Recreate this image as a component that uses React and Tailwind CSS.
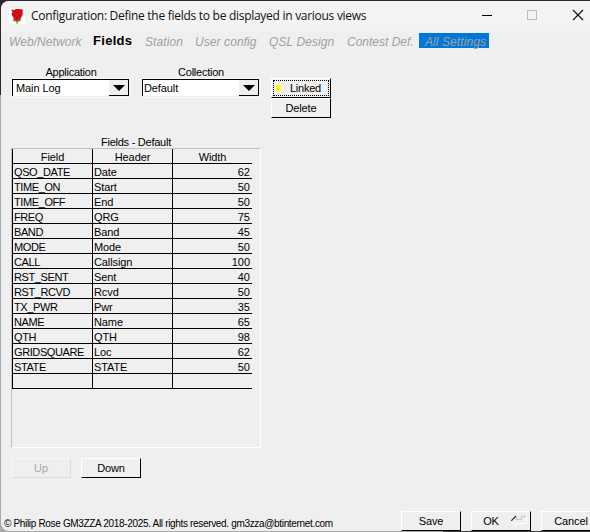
const rows = [
  ['QSO_DATE', 'Date', '62'],
  ['TIME_ON', 'Start', '50'],
  ['TIME_OFF', 'End', '50'],
  ['FREQ', 'QRG', '75'],
  ['BAND', 'Band', '45'],
  ['MODE', 'Mode', '50'],
  ['CALL', 'Callsign', '100'],
  ['RST_SENT', 'Sent', '40'],
  ['RST_RCVD', 'Rcvd', '50'],
  ['TX_PWR', 'Pwr', '35'],
  ['NAME', 'Name', '65'],
  ['QTH', 'QTH', '98'],
  ['GRIDSQUARE', 'Loc', '62'],
  ['STATE', 'STATE', '50'],
  ['', '', ''],
];

const cellStyles = ['px-px tracking-[-0.4px]', 'px-px tracking-[-0.1px]', 'pr-[2px] text-right'];

function Button({ children, disabled, className = '' }) {
  const tone = disabled
    ? 'border-t-[#f7f7f7] border-l-[#f7f7f7] border-r-[#dcdcdc] border-b-[#dcdcdc] text-[#a8a8a8]'
    : 'border-t-white border-l-white border-r-black border-b-black text-black';
  return (
    <button className={`flex h-5 w-[60px] shrink-0 items-center justify-center border bg-[#efefef] tracking-[-0.1px] ${tone} ${className}`}>
      {children}
    </button>
  );
}

function Combo({ label, value, inset }) {
  return (
    <div className="w-[120px]">
      <div className="h-3 text-center leading-[13px] tracking-[-0.25px]">{label}</div>
      <div className="flex h-5 border border-[#f8f8f8]">
        <div className="flex h-[17px] w-[117px] border border-b-0 border-black bg-white">
          <span className={`flex-1 leading-[17px] tracking-[-0.1px] ${inset}`}>{value}</span>
          <span className="flex w-[19px] items-center justify-center border-b border-black bg-[#efefef]">
            <svg width="12" height="6" viewBox="0 0 12 6"><path d="M0 0H12L6 6Z" /></svg>
          </span>
        </div>
      </div>
    </div>
  );
}

function Rose() {
  return (
    <svg width="16" height="16" viewBox="0 0 16 16" className="ml-2 bg-white">
      <path d="M8 10V16M8 13.5L3.5 12M8 14L12 12" stroke="#4f9a3f" strokeWidth="1.1" fill="none" />
      <path d="M2 1.5L5 2L7 1L10 1L14 1.5L13.5 4L14 6L12.5 9L11 12L8 13L5 12L4 9L2.5 6L3.5 4Z" fill="#d8121b" />
      <path d="M6 3L8 5L11 3M4 6L8 9L12 7M8 9V12" stroke="#a00c14" strokeWidth="1" fill="none" />
    </svg>
  );
}

export default function App() {
  return (
    <div className="h-[532px] w-[590px] overflow-hidden bg-[linear-gradient(to_bottom,#2b272b_95px,#aaaaaa_95px)] pt-px font-['Liberation_Sans',Arial,sans-serif] text-[11px] text-black">
      <div className="h-[531px] bg-[linear-gradient(to_right,transparent_443px,#3a3a3a_443px)] pb-px pl-px">
        <div className="flex h-[530px] w-[589px] flex-col overflow-hidden rounded-l-lg bg-[#efefef]">
          <header className="flex h-[30px] shrink-0 items-center bg-[#f3f3f3]">
            <Rose />
            <h1 className="ml-[6px] flex-1 whitespace-nowrap font-['Open_Sans',sans-serif] text-[12px] tracking-[-0.28px] text-[#111]">
              Configuration: Define the fields to be displayed in various views
            </h1>
            <svg width="108" height="30" viewBox="0 0 108 30" fill="none" shapeRendering="crispEdges">
              <path d="M0 14.5H10" stroke="#000" />
              <rect x="45.5" y="9.5" width="9" height="9" rx="1" stroke="#bdbdbd" />
              <path d="M91 9L101 19M101 9L91 19" stroke="#111" strokeWidth="1.2" shapeRendering="auto" />
            </svg>
          </header>

          <nav className="mt-[2px] grid h-[15px] shrink-0 grid-cols-[84px_52px_50px_74px_78px_72px_70px] pl-2 text-[12px] leading-[18px] tracking-[0.08px] whitespace-nowrap text-[#a0a0a0] italic">
            <span>Web/Network</span>
            <b className="text-[13px] leading-[15px] tracking-[0.3px] text-black not-italic">Fields</b>
            <span>Station</span>
            <span>User config</span>
            <span>QSL Design</span>
            <span className="tracking-normal">Contest Def.</span>
            <span className="h-[15px] bg-[#0078d7] pl-[6px]">All Settings</span>
          </nav>

          <section className="mt-[18px] flex pl-[10px]">
            <Combo label="Application" value="Main Log" inset="pl-[3px]" />
            <div className="ml-[10px]"><Combo label="Collection" value="Default" inset="pl-px" /></div>
            <div className="mt-3 ml-[10px]">
              <Button className="p-px">
                <span className="flex h-4 w-full items-center border border-dotted border-black">
                  <i className="ml-px box-content h-[6px] w-[5px] shrink-0 border border-white bg-[#ffff00]" />
                  <span className="ml-2 tracking-[-0.25px]">Linked</span>
                </span>
              </Button>
              <Button>Delete</Button>
            </div>
          </section>

          <section className="mt-[18px] ml-[10px] w-[250px]">
            <div className="h-3 text-center leading-[13px] tracking-[-0.25px]">Fields - Default</div>
            <div className="h-[300px] border border-t-[#c0c0c0] border-r-white border-b-white border-l-[#c0c0c0]">
              <div className="grid w-[240px] grid-cols-3 leading-[17px] whitespace-nowrap">
                {['Field', 'Header', 'Width'].map((h) => (
                  <div key={h} className="h-[15px] border-b border-l border-black text-center tracking-[-0.1px]">{h}</div>
                ))}
                {rows.map((row, i) =>
                  row.map((cell, j) => (
                    <div key={`${i}-${j}`} className={`h-[15px] border-b border-l border-black ${cellStyles[j]}`}>
                      {cell}
                    </div>
                  ))
                )}
              </div>
            </div>
            <div className="mt-[10px] flex gap-[10px]">
              <Button disabled>Up</Button>
              <Button>Down</Button>
            </div>
          </section>

          <footer className="mt-auto flex h-5 shrink-0 pl-[3px]">
            <p className="w-[397px] shrink-0 pt-[6px] text-[10px] leading-[14px] tracking-[-0.33px] whitespace-nowrap">
              © Philip Rose GM3ZZA 2018-2025. All rights reserved. gm3zza@btinternet.com
            </p>
            <div className="flex shrink-0 gap-[10px]">
              <Button>Save</Button>
              <Button className="pl-2">
                <span>OK</span>
                <svg width="16" height="12" viewBox="0 0 16 12" fill="none" className="ml-3">
                  <path d="M0 6L5 1" stroke="#333" strokeWidth="1.2" />
                  <path d="M5.5 1V4.5H10.5V1.5H15" stroke="#c4c4c4" />
                  <path d="M0 6L5.5 11V8.5H15.5V1" stroke="#fff" />
                </svg>
              </Button>
              <Button>Cancel</Button>
            </div>
          </footer>
        </div>
      </div>
    </div>
  );
}
